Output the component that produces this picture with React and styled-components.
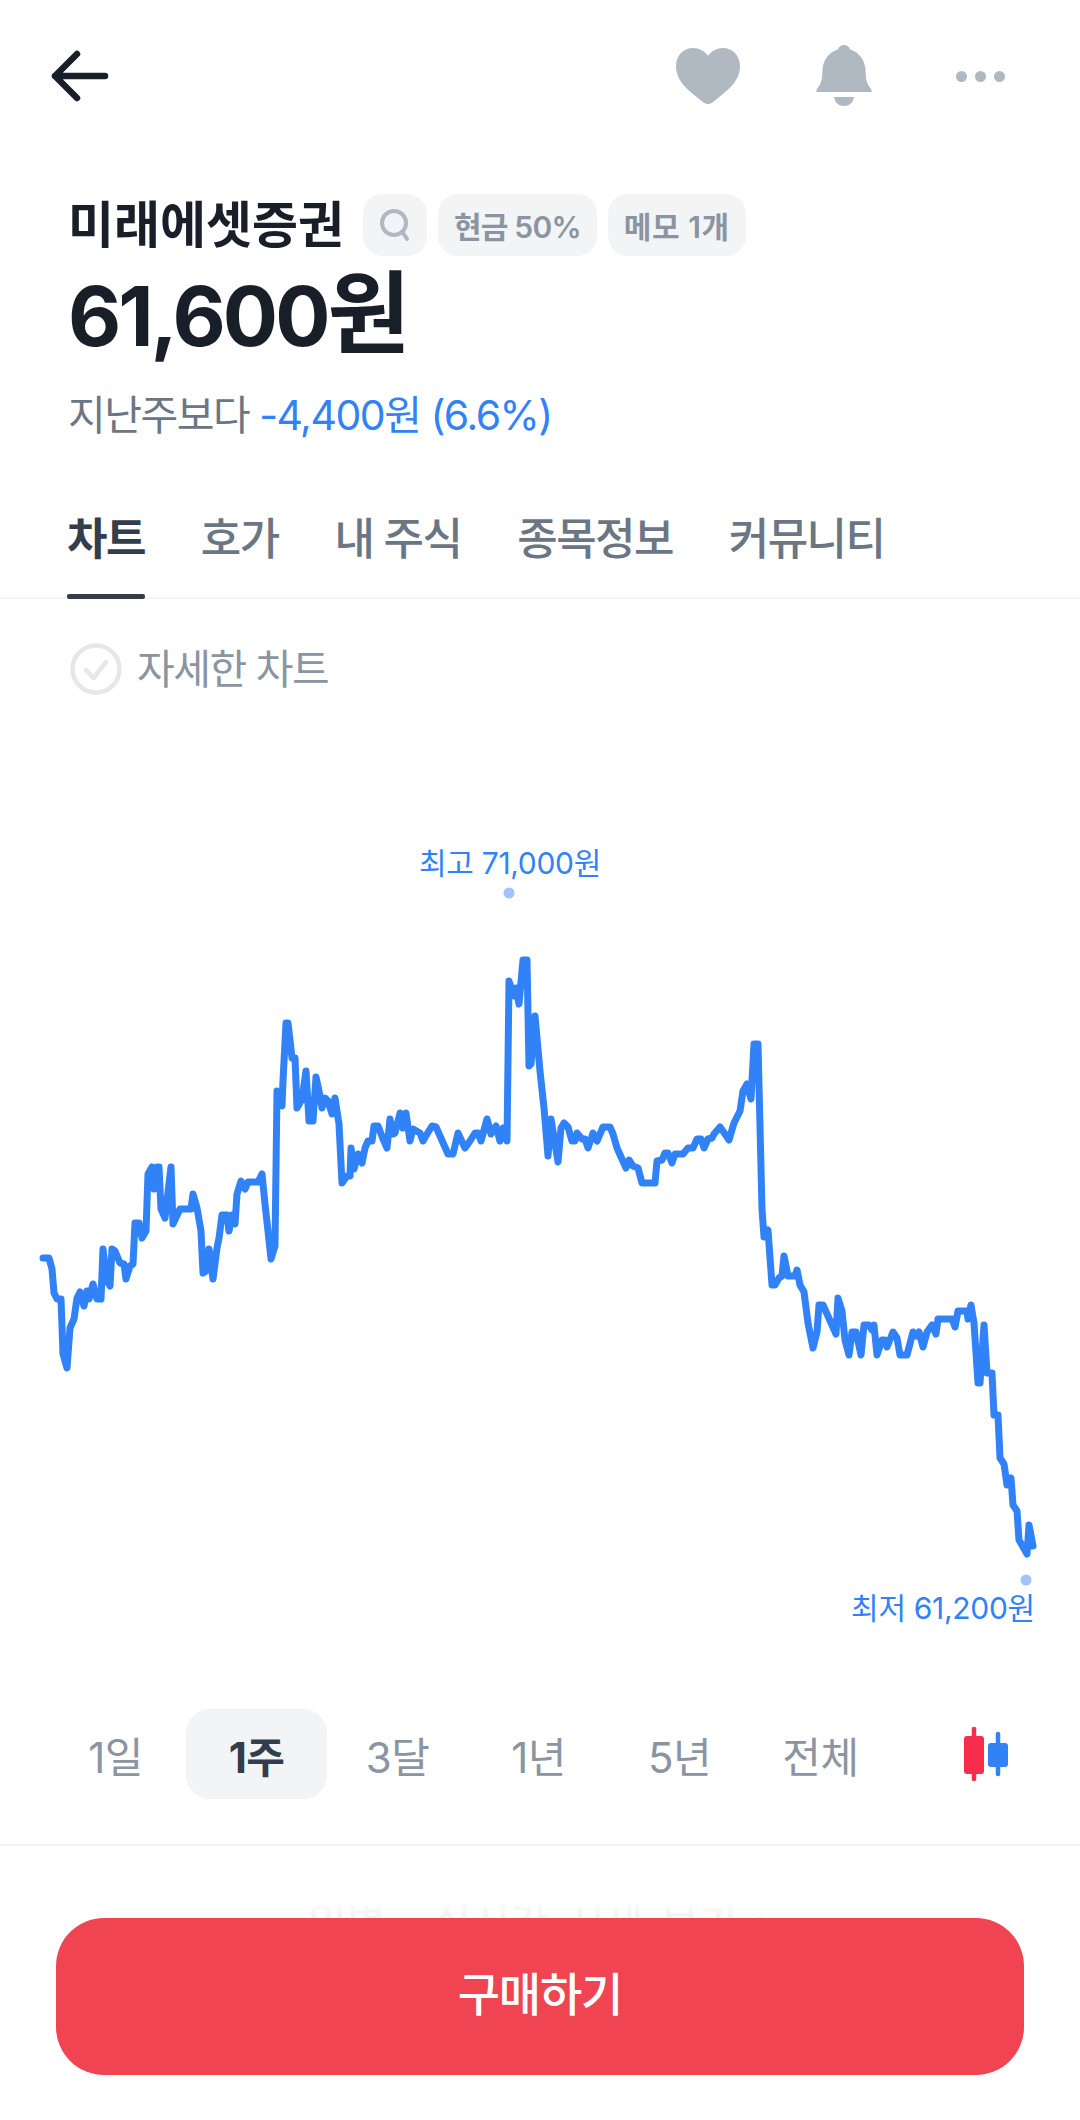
import React from "react";
import styled, { createGlobalStyle } from "styled-components";

const GlobalStyle = createGlobalStyle`
  html, body {
    margin: 0;
    padding: 0;
    background: #fff;
  }
  body {
    font-family: Inter, "Noto Sans CJK KR", sans-serif;
    color: #191f28;
  }
  * {
    box-sizing: border-box;
  }
`;

const CHART_LINE = [
  [43, 1257], [49, 1257], [52, 1268], [54, 1292], [57, 1298], [61, 1298], [63, 1353], [67, 1367],
  [70, 1327], [74, 1318], [77, 1297], [80, 1291], [84, 1305], [87, 1290], [89, 1298], [93, 1283],
  [97, 1298], [101, 1298], [103, 1248], [107, 1280], [110, 1285], [112, 1248], [115, 1250], [120, 1262],
  [124, 1263], [126, 1278], [130, 1265], [133, 1263], [135, 1222], [139, 1222], [142, 1237], [146, 1230],
  [148, 1173], [152, 1166], [154, 1188], [157, 1166], [159, 1166], [161, 1208], [165, 1217], [171, 1166],
  [173, 1223], [180, 1208], [191, 1208], [193, 1193], [197, 1207], [201, 1230], [203, 1272], [206, 1270],
  [209, 1248], [213, 1278], [217, 1247], [219, 1237], [222, 1214], [227, 1214], [229, 1230], [232, 1214],
  [235, 1223], [237, 1193], [241, 1180], [245, 1188], [248, 1181], [258, 1181], [262, 1173], [265, 1203],
  [268, 1230], [271, 1258], [275, 1245], [277, 1090], [282, 1105], [283, 1080], [286, 1022], [288, 1022],
  [292, 1057], [295, 1057], [297, 1107], [302, 1098], [306, 1070], [309, 1120], [313, 1120], [316, 1076],
  [319, 1090], [322, 1107], [325, 1097], [328, 1100], [332, 1113], [335, 1097], [339, 1123], [342, 1182],
  [347, 1175], [350, 1175], [351, 1147], [354, 1168], [358, 1153], [362, 1162],
  [365, 1147], [368, 1140], [372, 1140], [374, 1125], [378, 1125], [383, 1138], [387, 1147], [390, 1118],
  [393, 1133], [395, 1132], [400, 1112], [403, 1127], [406, 1112], [410, 1140], [413, 1128], [420, 1132],
  [423, 1140], [427, 1133], [432, 1125], [436, 1126], [448, 1153], [453, 1153], [458, 1132], [465, 1147],
  [470, 1140], [475, 1132], [478, 1132], [481, 1140], [487, 1118], [491, 1133], [496, 1125], [500, 1140],
  [503, 1127], [507, 1140], [509, 980], [514, 995], [516, 987], [519, 1003], [523, 959], [527, 959],
  [529, 1065], [531, 1063], [535, 1015], [540, 1070], [544, 1107], [548, 1155], [551, 1118], [558, 1161],
  [561, 1127], [564, 1122], [568, 1126], [572, 1140], [575, 1140], [577, 1132], [582, 1138], [585, 1138],
  [588, 1147], [593, 1132], [597, 1140], [603, 1126], [610, 1126], [613, 1133], [617, 1147], [626, 1167],
  [629, 1159], [633, 1165], [638, 1167], [642, 1182], [655, 1182], [657, 1160], [662, 1159], [665, 1152],
  [668, 1152], [672, 1162], [675, 1153], [683, 1153], [688, 1147], [693, 1147], [697, 1138], [701, 1138],
  [704, 1147], [708, 1138], [712, 1137], [714, 1133], [720, 1126], [725, 1133], [729, 1139], [734, 1122],
  [740, 1110], [743, 1090], [747, 1083], [751, 1098], [754, 1043], [758, 1043], [762, 1208], [764, 1236],
  [768, 1229], [772, 1284], [775, 1284], [779, 1277], [782, 1275], [784, 1255], [788, 1275], [795, 1275],
  [797, 1269], [800, 1284], [804, 1291], [808, 1322], [813, 1347], [817, 1331], [819, 1304], [823, 1304],
  [836, 1333], [838, 1297], [842, 1310], [845, 1339], [849, 1354], [852, 1331], [856, 1331], [861, 1354],
  [864, 1324], [869, 1324], [872, 1329], [874, 1324], [877, 1354], [882, 1339], [885, 1339], [887, 1346],
  [893, 1331], [897, 1337], [900, 1354], [907, 1354], [913, 1331], [917, 1335], [919, 1331], [923, 1346],
  [927, 1331], [932, 1324], [936, 1333], [938, 1318], [952, 1318], [955, 1326], [958, 1310], [967, 1310],
  [968, 1318], [971, 1304], [974, 1322], [978, 1382], [980, 1382], [984, 1324], [987, 1372], [992, 1372],
  [994, 1414], [998, 1414], [1000, 1457], [1004, 1463], [1007, 1484], [1011, 1477], [1013, 1504], [1017, 1510],
  [1019, 1539], [1027, 1553], [1029, 1524], [1033, 1545],
];

const CHART_TOP = 700;
const RANGES = ["1일", "1주", "3달", "1년", "5년", "전체"];
const TABS = ["차트", "호가", "내 주식", "종목정보", "커뮤니티"];

function App() {
  const points = CHART_LINE.map(([x, y]) => `${x},${y - CHART_TOP}`).join(" ");

  return (
    <>
      <GlobalStyle />
      <Page>
        <Header>
          <BackButton aria-label="뒤로">
            <svg width="60" height="56" viewBox="0 0 60 56" fill="none" stroke="#191f28" strokeWidth="6.5" strokeLinecap="round" strokeLinejoin="round">
              <path d="M55 28H5M27 6L5 28l22 22" />
            </svg>
          </BackButton>
          <HeaderIcons>
            <svg width="64" height="56" viewBox="0 0 64 56" fill="#b0b8c1">
              <path d="M32 56C29 56 27 54 22 50C12 42 0 33 0 18C0 8 7 0 17 0C23 0 29 3 32 8C35 3 41 0 47 0C57 0 64 8 64 18C64 33 52 42 42 50C37 54 35 56 32 56Z" />
            </svg>
            <svg width="56" height="62" viewBox="0 0 56 62" fill="#b0b8c1">
              <path d="M28 0C31 0 33.500 2 34 4.500C43 7 49 15 49.500 25L50 33C50.500 37 52 40 55 44C57 47 55.500 47 52 47H4C.5 47 -1 47 1 44C4 40 5.500 37 6 33L6.500 25C7 15 13 7 22 4.500C22.500 2 25 0 28 0Z" />
              <path d="M18 52H38C37 58 33 61 28 61C23 61 19 58 18 52Z" />
            </svg>
            <MoreDots>
              <Dot />
              <Dot />
              <Dot />
            </MoreDots>
          </HeaderIcons>
        </Header>

        <Summary>
          <TitleRow>
            <StockName>미래에셋증권</StockName>
            <Pill>
              <svg width="32" height="34" viewBox="0 0 32 34" fill="none" stroke="#b0b8c1" strokeWidth="4" strokeLinecap="round">
                <circle cx="15" cy="15" r="12" />
                <path d="M23.500 24L28 31" />
              </svg>
            </Pill>
            <Pill>현금 50%</Pill>
            <Pill $spacing={0.6}>메모 1개</Pill>
          </TitleRow>
          <Price>
            61,600<PriceUnit>원</PriceUnit>
          </Price>
          <Change>
            지난주보다 <ChangeValue>-4,400원 (6.6%)</ChangeValue>
          </Change>
        </Summary>

        <Tabs>
          {TABS.map((tab, i) => (
            <Tab key={tab} $active={i === 0}>
              {tab}
            </Tab>
          ))}
        </Tabs>

        <DetailRow>
          <svg width="52" height="52" viewBox="0 0 52 52" fill="none" stroke="#e5e8eb" strokeWidth="4.500" strokeLinecap="round" strokeLinejoin="round">
            <circle cx="26" cy="26" r="23.500" />
            <path d="M16 27l7.500 8L36 19" />
          </svg>
          <DetailLabel>자세한 차트</DetailLabel>
        </DetailRow>

        <Chart>
          <ChartLabel $x={510} $top={144}>
            최고 71,000원
          </ChartLabel>
          <svg width="1080" height="900" viewBox="0 0 1080 900" fill="none">
            <polyline points={points} stroke="#3182f6" strokeWidth="7" strokeLinejoin="round" strokeLinecap="round" />
            <circle cx="509" cy="192" r="5.500" fill="#a0c4fb" />
            <circle cx="1026" cy="879" r="5.500" fill="#a0c4fb" />
          </svg>
          <ChartLabel $x={943} $top={889}>
            최저 61,200원
          </ChartLabel>
        </Chart>

        <RangeBar>
          {RANGES.map((range, i) => (
            <RangeItem key={range} $active={i === 1}>
              {range}
            </RangeItem>
          ))}
          <CandleToggle>
            <svg width="46" height="54" viewBox="0 0 46 54" strokeLinecap="round">
              <path d="M11 2V52" stroke="#f62d4d" strokeWidth="4.500" />
              <rect x="1" y="9" width="20" height="38" rx="3" fill="#f62d4d" />
              <path d="M35 7V47" stroke="#3182f6" strokeWidth="4.500" />
              <rect x="25" y="16" width="20" height="24" rx="3" fill="#3182f6" />
            </svg>
          </CandleToggle>
        </RangeBar>

        <Divider />
        <FadedLink>일별 · 실시간 시세 보기 ›</FadedLink>

        <BottomBar>
          <BuyButton>구매하기</BuyButton>
        </BottomBar>
      </Page>
    </>
  );
}

const Page = styled.div`
  position: relative;
  width: 1080px;
  height: 2120px;
  overflow: hidden;
  background: #fff;
`;

const Header = styled.header`
  height: 152px;
  padding: 0 75px 0 50px;
  display: flex;
  align-items: center;
  justify-content: space-between;
`;

const BackButton = styled.div`
  display: flex;
  align-items: center;
`;

const HeaderIcons = styled.div`
  display: flex;
  align-items: center;
  gap: 76px;
`;

const MoreDots = styled.div`
  display: flex;
  gap: 8px;
  margin-left: 8px;
`;

const Dot = styled.span`
  width: 11px;
  height: 11px;
  border-radius: 50%;
  background: #b0b8c1;
`;

const Summary = styled.section`
  padding: 42px 0 0 68px;
`;

const TitleRow = styled.div`
  display: flex;
  align-items: center;
  gap: 11px;
  height: 62px;
`;

const StockName = styled.h1`
  margin: 0 8px 0 0;
  font-size: 50px;
  font-weight: 700;
  letter-spacing: 0;
  line-height: 62px;
  color: #191f28;
`;

const Pill = styled.span`
  height: 62px;
  padding: 0 16px;
  display: flex;
  align-items: center;
  border-radius: 20px;
  background: #f2f4f6;
  color: #8b95a1;
  font-size: 30px;
  font-weight: 600;
  letter-spacing: ${(props) => props.$spacing ?? -0.8}px;
`;

const Price = styled.div`
  margin-top: 11px;
  font-size: 82px;
  font-weight: 700;
  letter-spacing: -3px;
  line-height: 100px;
  color: #191f28;
`;

const PriceUnit = styled.span`
  font-size: 90px;
  letter-spacing: 0;
  line-height: 0;
`;

const Change = styled.div`
  margin-top: 22px;
  font-size: 41px;
  letter-spacing: -1.500px;
  line-height: 52px;
  color: #6b7684;
`;

const ChangeValue = styled.span`
  color: #3182f6;
`;

const Tabs = styled.nav`
  margin-top: 49px;
  height: 109px;
  padding-left: 67px;
  display: flex;
  gap: 56px;
  border-bottom: 2px solid #f2f4f6;
`;

const Tab = styled.div`
  position: relative;
  padding-top: 21px;
  font-size: 44px;
  font-weight: ${(props) => (props.$active ? 700 : 500)};
  letter-spacing: -1.600px;
  line-height: 56px;
  color: ${(props) => (props.$active ? "#333d4b" : "#6b7684")};

  &::after {
    content: "";
    display: ${(props) => (props.$active ? "block" : "none")};
    position: absolute;
    left: 0;
    right: 0;
    bottom: -2px;
    height: 5px;
    border-radius: 2px;
    background: #333d4b;
  }
`;

const DetailRow = styled.div`
  height: 58px;
  margin-top: 41px;
  padding-left: 70px;
  display: flex;
  align-items: center;
  gap: 15px;
`;

const DetailLabel = styled.span`
  font-size: 41px;
  font-weight: 400;
  letter-spacing: -1.500px;
  line-height: 58px;
  color: #8b95a1;
`;

const Chart = styled.div`
  position: relative;
  flex: none;
  height: 1000px;
  margin-top: 3px;
`;

const ChartLabel = styled.span`
  position: absolute;
  left: ${(props) => props.$x}px;
  top: ${(props) => props.$top}px;
  transform: translateX(-50%);
  font-size: 30px;
  font-weight: 400;
  letter-spacing: -0.300px;
  line-height: 36px;
  color: #3182f6;
  white-space: nowrap;
`;

const RangeBar = styled.div`
  height: 90px;
  margin-top: 8px;
  padding-left: 45px;
  display: flex;
  align-items: center;
`;

const RangeItem = styled.div`
  width: 141px;
  height: 90px;
  display: flex;
  align-items: center;
  justify-content: center;
  border-radius: 24px;
  background: ${(props) => (props.$active ? "#f2f4f6" : "transparent")};
  font-size: 42px;
  font-weight: ${(props) => (props.$active ? 700 : 400)};
  letter-spacing: -0.500px;
  color: ${(props) => (props.$active ? "#333d4b" : "#8b95a1")};
`;

const CandleToggle = styled.div`
  margin-left: 72px;
  display: flex;
`;

const Divider = styled.div`
  height: 2px;
  margin-top: 45px;
  background: #f2f4f6;
`;

const FadedLink = styled.div`
  margin-top: 50px;
  text-align: center;
  font-size: 42px;
  line-height: 56px;
  font-weight: 500;
  word-spacing: 6px;
  color: #8b95a1;
`;

const BottomBar = styled.div`
  position: absolute;
  left: 0;
  right: 0;
  bottom: 0;
  height: 220px;
  padding: 18px 56px 0;
  background: linear-gradient(to bottom, rgba(255, 255, 255, 0.98) 0, rgba(255, 255, 255, 0.88) 18px, #fff 19px);
`;

const BuyButton = styled.button`
  display: block;
  width: 100%;
  height: 157px;
  padding: 0 0 12px;
  border: 0;
  border-radius: 48px;
  background: #f04452;
  color: #fff;
  font-family: inherit;
  font-size: 46px;
  font-weight: 500;
  letter-spacing: -1.200px;
`;

export default App;
